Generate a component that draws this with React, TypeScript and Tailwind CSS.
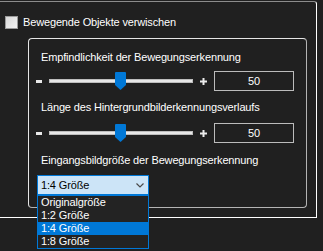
import { useState } from 'react';

const SIZES = ['Originalgröße', '1:2 Größe', '1:4 Größe', '1:8 Größe'];

function Slider({ value }: { value: number }) {
  return (
    <div className="flex h-[20px] items-center">
      <span className="h-[3px] w-[6px] bg-[#e8e8e8]" />
      <div className="relative ml-[7px] flex h-[20px] w-[144px] items-center">
        <div className="h-[4px] w-full border border-[#bdbdbd] bg-[#e7e7e7]" />
        {/* thumb */}
        <svg
          className="absolute top-[1px]"
          style={{ left: `${(value / 100) * 144 - 6}px` }}
          width="11"
          height="18"
          viewBox="0 0 11 18"
        >
          <path d="M0 1 Q0 0 1 0 H10 Q11 0 11 1 V13 L5.5 18 L0 13 Z" fill="#0078d7" />
        </svg>
      </div>
      <svg className="ml-[7px]" width="7" height="7" viewBox="0 0 7 7">
        <path d="M3.5 0 V7 M0 3.5 H7" stroke="#ececec" strokeWidth="2" />
      </svg>
      <div className="ml-[7px] flex h-[20px] w-[80px] items-center justify-center border border-[#bcbcbc] text-white">
        {value}
      </div>
    </div>
  );
}

export default function App() {
  const [size] = useState(2);

  return (
    <div className="h-[251px] w-[323px] overflow-hidden bg-[#202020] font-['Liberation_Sans',Arial,sans-serif] text-[11px] leading-[14px] tracking-[-0.15px] text-white">
      <div className="-ml-[4px] mt-px h-[217px] w-[321px] rounded-tr-[3px] border border-[#8c8c8c] border-r-white border-b-white pl-[8px] pt-[13px]">
        <label className="flex h-[14px] items-center gap-[5px]">
          <span className="h-[13px] w-[13px] border border-[#9a9a9a] bg-gradient-to-br from-[#d8d8d8] to-[#f4f4f4]" />
          Bewegende Objekte verwischen
        </label>

        <div className="ml-[23px] mt-[9px] h-[170px] w-[279px] rounded-[4px] border border-[#e6e6e6] border-r-[#b4b4b4] border-b-[#b4b4b4] pl-[7px] pt-[11px]">
          <p className="ml-[5px]">Empfindlichkeit der Bewegungserkennung</p>
          <div className="mt-[7px]">
            <Slider value={50} />
          </div>

          <p className="ml-[5px] mt-[9px]">Länge des Hintergrundbilderkennungsverlaufs</p>
          <div className="mt-[9px]">
            <Slider value={50} />
          </div>

          <p className="ml-[5px] mt-[10px]">Eingangsbildgröße der Bewegungserkennung</p>
          <div className="relative ml-[1px] mt-[8px] w-[112px]">
            <div className="flex h-[20px] items-center justify-between border border-[#0078d7] bg-[#cce4f7] pl-[3px] pr-[4px] text-black">
              {SIZES[size]}
              <svg width="8" height="5" viewBox="0 0 8 5">
                <path d="M0.5 0.5 L4 4 L7.5 0.5" fill="none" stroke="#4a4a4a" strokeWidth="1.2" />
              </svg>
            </div>
            <ul className="absolute left-0 top-[20px] w-[112px] border border-[#0078d7] bg-[#232323]">
              {SIZES.map((s, i) => (
                <li
                  key={s}
                  className={`h-[13px] pl-[3px] leading-[13px] ${i === size ? 'bg-[#0078d7]' : ''}`}
                >
                  {s}
                </li>
              ))}
            </ul>
          </div>
        </div>
      </div>
    </div>
  );
}
